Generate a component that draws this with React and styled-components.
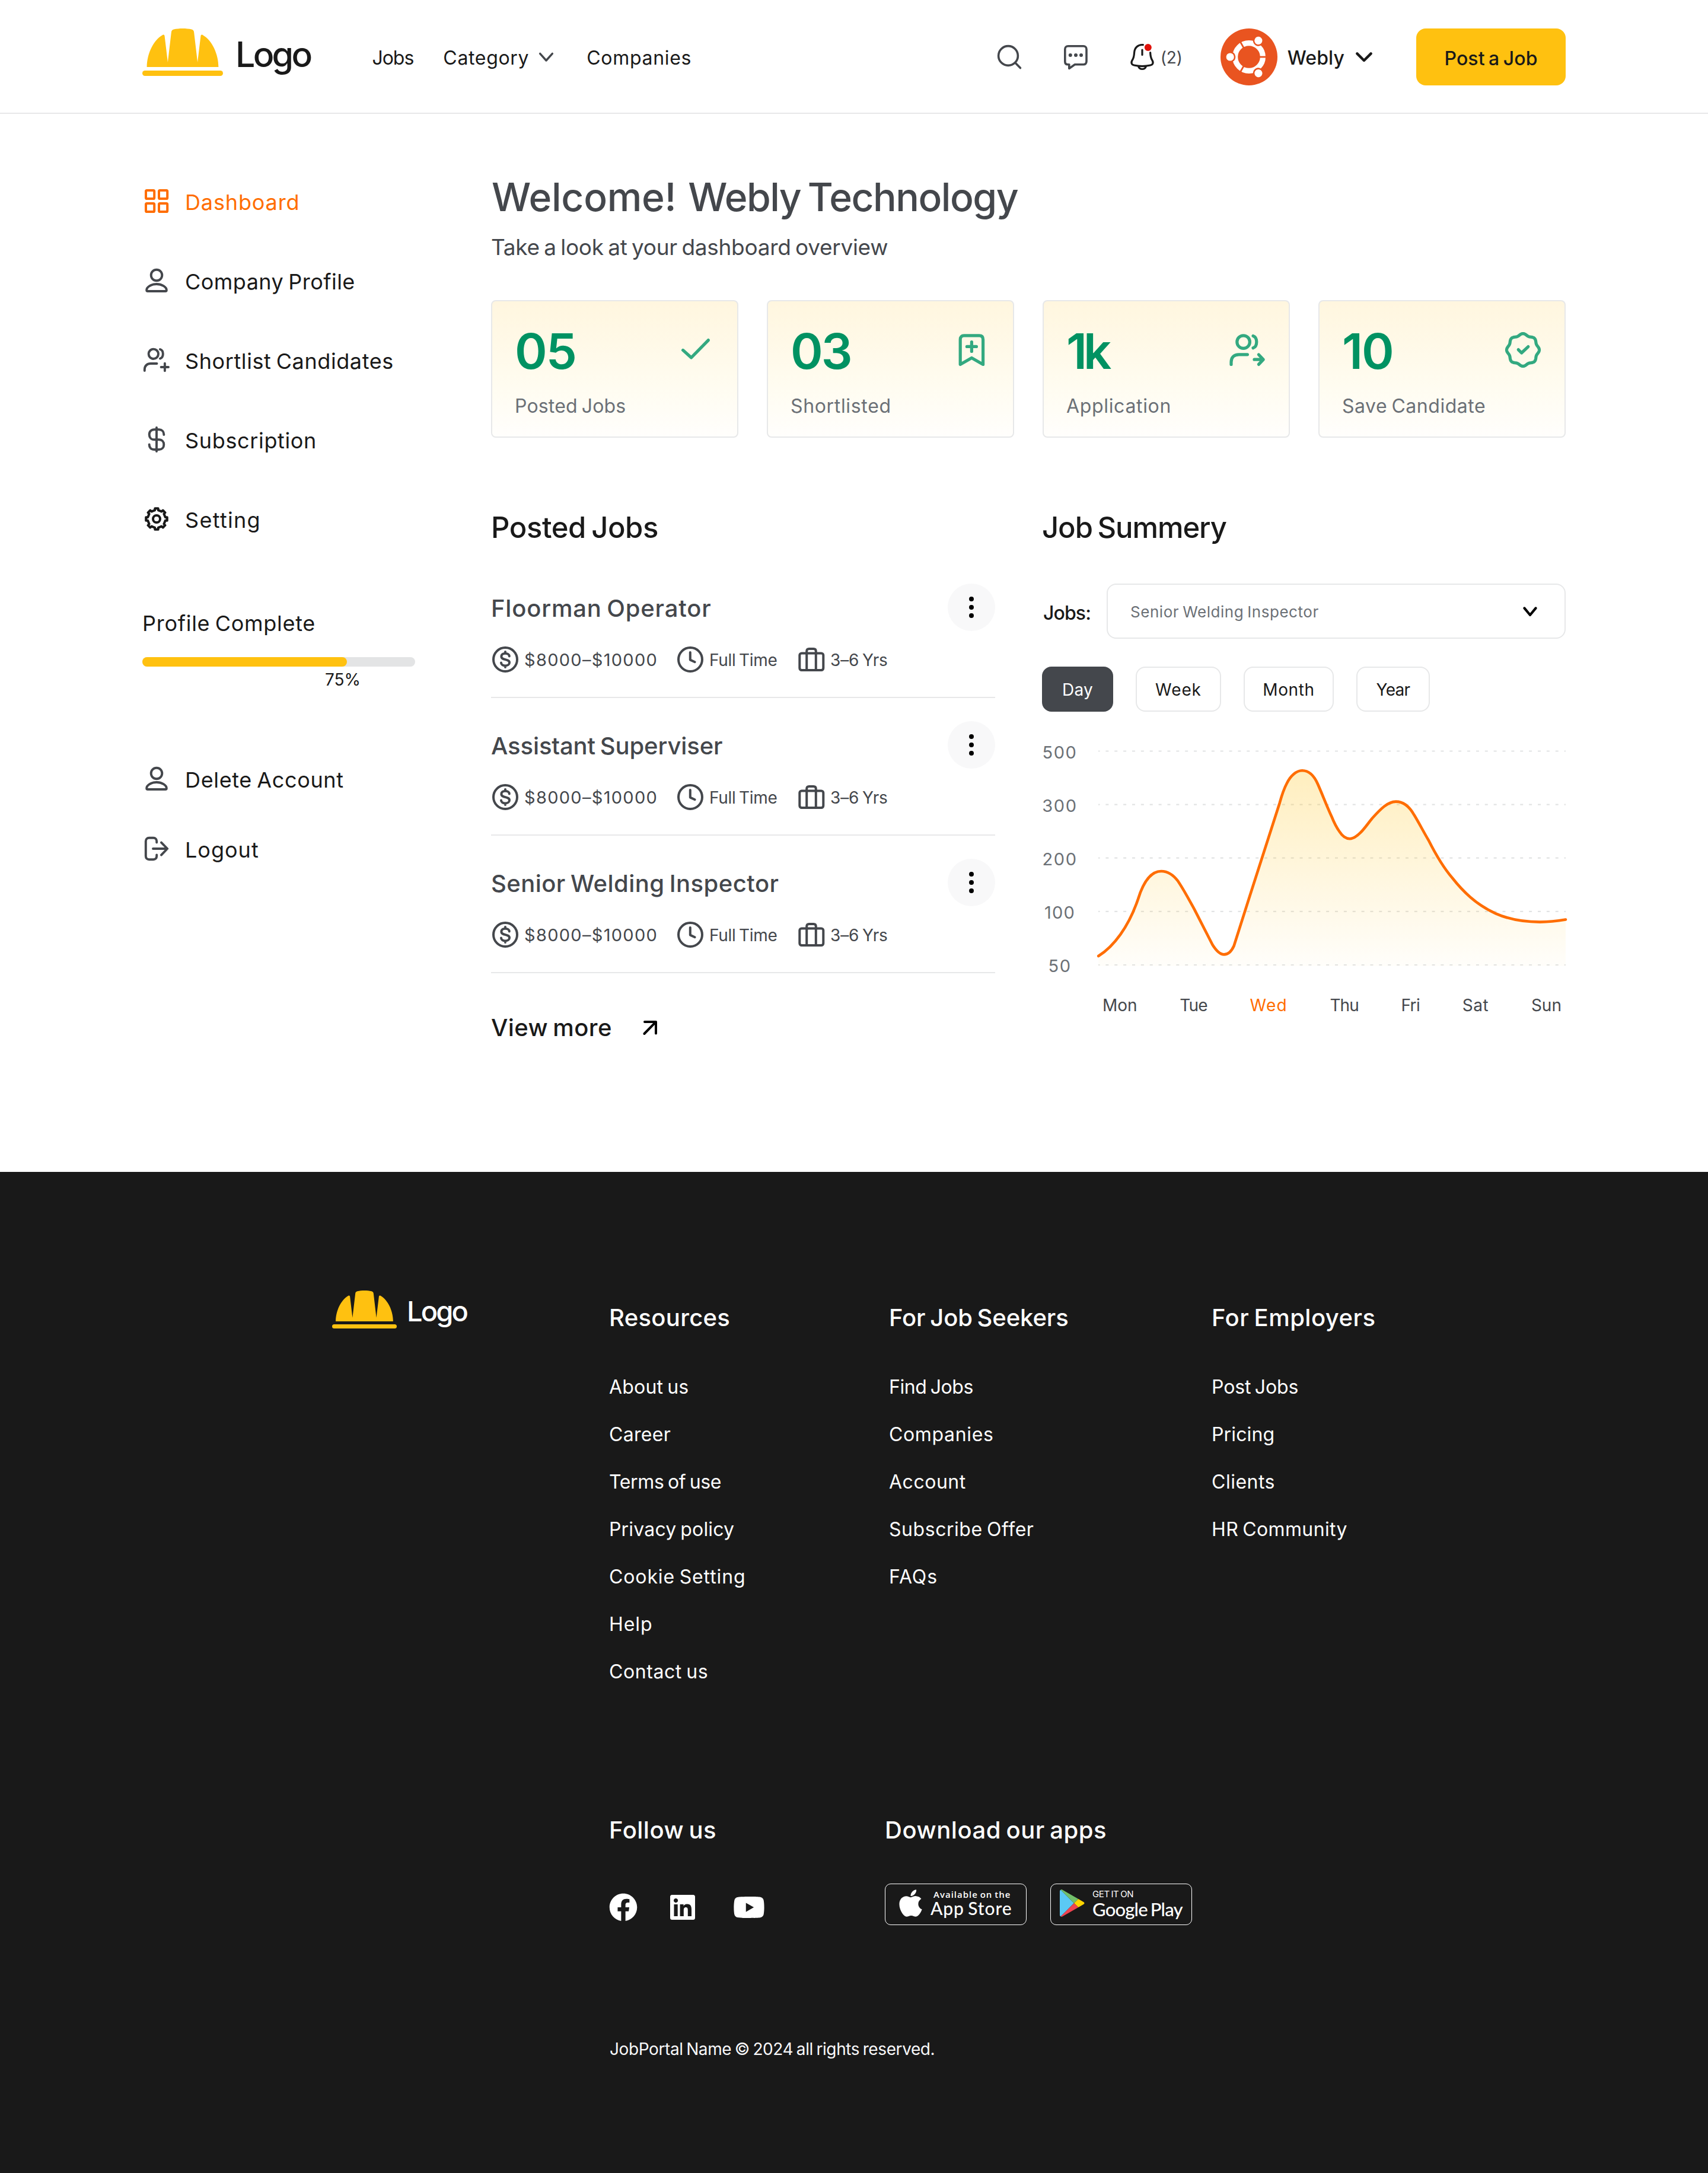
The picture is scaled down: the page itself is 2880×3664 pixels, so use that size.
import React from "react";
import styled, { createGlobalStyle, css } from "styled-components";
import { FaApple, FaFacebook, FaLinkedin, FaYoutube } from "react-icons/fa";

const color = {
  ink: "#191919",
  slate: "#44474c",
  muted: "#6b7076",
  line: "#e7e8e9",
  amber: "#ffc110",
  orange: "#ff6d00",
  green: "#009262",
  white: "#ffffff",
};

const GlobalStyle = createGlobalStyle`
  *, *::before, *::after { box-sizing: border-box; }
  body {
    margin: 0;
    background: ${color.white};
    color: ${color.ink};
    font-family: Inter, "Noto Sans", sans-serif;
  }
  h1, h2, h3, p, ul { margin: 0; padding: 0; font-weight: inherit; }
  ul { list-style: none; }
  a { color: inherit; text-decoration: none; }
  button { font-family: inherit; margin: 0; padding: 0; border: 0; background: none; color: inherit; }
  svg { display: block; flex: none; overflow: visible; }
`;

const tracking = css`
  letter-spacing: ${(p) => p.$ls || 0}px;
  word-spacing: -0.07em;
  white-space: pre;
`;

const Page = styled.div`
  width: 2880px;
`;

/* ---------- icons ---------- */

const Stroke = styled.svg`
  width: ${(p) => p.$size || 48}px;
  height: ${(p) => p.$size || 48}px;
  fill: none;
  stroke: ${(p) => p.$color || color.slate};
  stroke-width: ${(p) => p.$weight || 3.9};
  stroke-linecap: round;
  stroke-linejoin: round;
`;

const polar = (steps, radius) =>
  Array.from({ length: steps }, (_, i) => {
    const a = (i / steps) * Math.PI * 2 - Math.PI / 2;
    const r = radius(i, a);
    return [Math.cos(a) * r, Math.sin(a) * r];
  });

const closed = (points, c) =>
  "M" + points.map(([x, y]) => `${(c + x).toFixed(2)} ${(c + y).toFixed(2)}`).join("L") + "Z";

const gearPath = closed(
  Array.from({ length: 8 }).flatMap((_, i) =>
    [
      [-17, 14.8],
      [-11, 15],
      [-8.5, 18],
      [8.5, 18],
      [11, 15],
      [17, 14.8],
    ].map(([deg, r]) => {
      const a = ((i * 45 + deg - 90) * Math.PI) / 180;
      return [Math.cos(a) * r, Math.sin(a) * r];
    })
  ),
  24
);

const badgePath = closed(
  polar(160, (i, a) => 26 + 1.5 * Math.cos(8 * (a + Math.PI / 2))),
  32
);

const GridIcon = () => (
  <Stroke viewBox="0 0 48 48" $color={color.orange} $weight={4}>
    <rect x="6" y="6" width="14.2" height="14" rx="1.6" />
    <rect x="28" y="6" width="14.2" height="14" rx="1.6" />
    <rect x="6" y="28" width="14.2" height="14" rx="1.6" />
    <rect x="28" y="28" width="14.2" height="14" rx="1.6" />
  </Stroke>
);

const UserIcon = () => (
  <Stroke viewBox="0 0 48 48">
    <circle cx="24" cy="15" r="9.3" />
    <path d="M24 30C15 30 7.2 35 7.2 40.2C7.2 41.3 8 42 9 42H39C40 42 40.8 41.3 40.8 40.2C40.8 35 33 30 24 30Z" />
  </Stroke>
);

const UsersPlusIcon = () => (
  <Stroke viewBox="0 0 48 48">
    <circle cx="18.8" cy="13.8" r="8.2" />
    <path d="M30 6C33.2 7 34.8 10 34.8 13.8S33.2 20.6 30 21.6M3.8 42V40C3.8 34 8 30 14 30H24.5M37.9 29.8V42.2M31.6 36H44" />
  </Stroke>
);

const DollarIcon = () => (
  <Stroke viewBox="0 0 48 48">
    <path d="M24 4V44M36.3 16V15.5C36.3 10.5 33 7.3 28 7.3H20C15 7.3 11.7 10.5 11.7 15.7S15 24.3 20 24.3H28C33 24.3 36.3 27.8 36.3 32.7S33 41 28 41H20C15 41 11.7 37.8 11.7 33V32.4" />
  </Stroke>
);

const GearIcon = () => (
  <Stroke viewBox="0 0 48 48" $color={color.ink} $weight={4}>
    <path d={gearPath} />
    <circle cx="24" cy="24" r="6" />
  </Stroke>
);

const LogoutIcon = () => (
  <Stroke viewBox="0 0 48 48">
    <path d="M24.2 13.6V11.4C24.2 8 22 5.8 18.6 5.8H11.4C8 5.8 5.8 8 5.8 11.4V36.6C5.8 40 8 42.2 11.4 42.2H18.6C22 42.2 24.2 40 24.2 36.6V34.4M18 24H42M32 13.6L42.2 24L32 34.6" />
  </Stroke>
);

const SearchIcon = () => (
  <Stroke viewBox="0 0 48 48" $weight={3.6}>
    <circle cx="22" cy="22" r="16.4" />
    <path d="M34 34L42.4 42.6" />
  </Stroke>
);

const ChatIcon = () => (
  <Stroke viewBox="0 0 48 48" $weight={3.6}>
    <path d="M10.6 36.8H12.8V43.4L22.4 36.8H36.8C40 36.8 42 34.8 42 31.6V11C42 7.8 40 5.8 36.8 5.8H11C7.8 5.8 5.8 7.8 5.8 11V32C5.8 35 7.6 36.8 10.6 36.8Z" />
    <g fill={color.slate} stroke="none">
      <circle cx="14.8" cy="21" r="3" />
      <circle cx="24" cy="21" r="3" />
      <circle cx="33" cy="21" r="3" />
    </g>
  </Stroke>
);

const BellIcon = () => (
  <Stroke viewBox="0 0 48 48" $color={color.ink} $weight={3.2}>
    <path d="M25.4 3.6C16.8 2.8 11.2 8.4 10.6 16.4C10.2 22.4 10.2 24.8 7.4 29.2C4.6 33.6 5.8 37 10.2 38C19.2 40 28.8 40 37.8 38C42.2 37 43.4 33.6 40.6 29.2C38 25 37.8 21.4 37.6 16.6M24 12V20.4M17.8 40.6C19.6 45.8 28.4 45.8 30.2 40.6" />
    <circle cx="33.8" cy="8" r="6" fill="#e0120b" stroke="none" />
  </Stroke>
);

const ChevronIcon = ({ stroke = color.ink, weight = 4.4, reach = 11.6 }) => (
  <Stroke viewBox="0 0 36 36" $size={36} $color={stroke} $weight={weight}>
    <path d={`M${18 - reach} 12.4L18 24L${18 + reach} 12.4`} />
  </Stroke>
);

const AvatarLogo = () => (
  <svg width="96" height="96" viewBox="0 0 96 96">
    <circle cx="48" cy="48" r="48" fill="#e95420" />
    <circle cx="48" cy="48" r="23.4" fill="none" stroke="#fff" strokeWidth="9.2" />
    {[0, 120, 240].map((deg) => (
      <g key={deg} transform={`rotate(${deg} 48 48)`}>
        <path d="M62 48H80" stroke="#e95420" strokeWidth="2.8" />
        <circle cx="16.2" cy="48" r="9.2" fill="#e95420" />
        <circle cx="16.2" cy="48" r="6.6" fill="#fff" />
      </g>
    ))}
  </svg>
);

const HatMark = ({ width }) => (
  <svg width={width} height={(width * 80) / 136} viewBox="0 0 136 80" fill={color.amber}>
    <path d="M7.6 65C7.6 44 18 20 34.2 10.9C36.4 9.9 37.4 11 37.6 13L42.9 57L48.8 7C49 4 50 2.5 53 1.6C62 -.4 74 -.4 83 1.6C86 2.5 87 4 87.2 7L93.1 57L98.4 13C98.6 11 99.6 9.9 101.8 10.9C118 20 128.4 44 128.4 65Z" />
    <rect y="71" width="136" height="9" rx="4.4" />
  </svg>
);

const StatStroke = styled(Stroke)`
  stroke: #33a980;
  stroke-width: 5.2;
  margin-top: -4px;
`;

const statIcons = {
  check: (
    <StatStroke viewBox="0 0 64 64" $size={64}>
      <path d="M10.6 32.4L24.6 45L53.4 15.6" />
    </StatStroke>
  ),
  bookmark: (
    <StatStroke viewBox="0 0 64 64" $size={64}>
      <path d="M13.2 56.4V14.4C13.2 10 15.4 7.8 19.6 7.8H45.2C49.4 7.8 51.6 10 51.6 14.4V56.4L32.4 45.4ZM32.4 18.6V34.4M24.4 26.4H40.4" />
    </StatStroke>
  ),
  users: (
    <StatStroke viewBox="0 0 64 64" $size={64}>
      <circle cx="25.6" cy="18.6" r="10.8" />
      <path d="M42 8.4C45.8 9.6 47.8 13.6 47.8 18.6S45.8 27.6 42 28.8M5 56.4V52.6C5 44.6 10 39.8 18 39.8H32.4M44 48.2H59M51.4 40L59.2 48.2L51.4 56.4" />
    </StatStroke>
  ),
  badge: (
    <StatStroke viewBox="0 0 64 64" $size={64}>
      <path d={badgePath} />
      <path d="M24.2 31.6L29.6 37L40.8 26.6" />
    </StatStroke>
  ),
};

const MoneyIcon = () => (
  <Stroke viewBox="0 0 48 48" $weight={4}>
    <circle cx="24" cy="24" r="20" />
    <path d="M30.8 18.6C30.8 15.6 28 13.8 24 13.8S17.4 15.8 17.4 18.9C17.4 25.8 31 22.4 31 29.2C31 32.4 28 34.4 24 34.4S17 32.6 17 29.6M24 11V13.8M24 34.4V37" />
  </Stroke>
);

const ClockIcon = () => (
  <Stroke viewBox="0 0 48 48" $weight={4}>
    <circle cx="24" cy="24" r="20" />
    <path d="M23.8 12V24.6L31.6 28.2" />
  </Stroke>
);

const SuitcaseIcon = () => (
  <Stroke viewBox="0 0 48 48" $weight={4}>
    <rect x="4.3" y="13.4" width="40" height="28.6" rx="3.4" />
    <path d="M16.2 13.4V42M31.8 13.4V42M16.2 13V10C16.2 7.4 17.6 6 20.2 6H27.8C30.4 6 31.8 7.4 31.8 10V13" />
  </Stroke>
);

const ArrowUpRight = () => (
  <Stroke viewBox="0 0 32 32" $size={32} $color="#000" $weight={4}>
    <path d="M6.4 26L25.6 6.4M7 6H26V25.4" />
  </Stroke>
);

/* ---------- header ---------- */

const HeaderBar = styled.header`
  display: flex;
  height: 192px;
  padding: 48px 240px 0;
  border-bottom: 2px solid ${color.line};
`;

const Brand = styled.a`
  display: flex;
  align-items: flex-start;
  gap: ${(p) => p.$gap}px;
`;

const BrandName = styled.span`
  font-size: ${(p) => p.$size}px;
  font-weight: 500;
  line-height: ${(p) => p.$line}px;
  color: ${(p) => p.$color || color.ink};
  ${tracking}
`;

const MainNav = styled.nav`
  display: flex;
  align-items: center;
  gap: 50px;
  height: 96px;
  margin-left: 104px;
`;

const NavLink = styled.a`
  display: flex;
  align-items: center;
  gap: 11px;
`;

const NavText = styled.span`
  padding-top: 4px;
  font-size: 32px;
  line-height: 40px;
  font-weight: ${(p) => p.$weight || 400};
  ${tracking}
`;

const Actions = styled.div`
  display: flex;
  align-items: center;
  gap: 64px;
  height: 96px;
  margin-left: auto;
`;

const Notifications = styled.div`
  display: flex;
  align-items: center;
  gap: 7px;
`;

const Count = styled.span`
  padding-top: 2px;
  font-size: 28px;
  line-height: 36px;
  color: ${color.slate};
  ${tracking}
`;

const Account = styled.div`
  display: flex;
  align-items: center;
`;

const AccountName = styled(NavText)`
  margin: 0 15px 0 17px;
`;

const PostButton = styled.button`
  width: 252px;
  height: 96px;
  margin-left: 6px;
  padding-top: 4px;
  border-radius: 16px;
  background: ${color.amber};
  color: ${color.ink};
  font-size: 32px;
  font-weight: 500;
  ${tracking}
`;

const Header = () => (
  <HeaderBar>
    <Brand $gap={21}>
      <HatMark width={136} />
      <BrandName $size={59} $line={88} $ls={-3.7}>Logo</BrandName>
    </Brand>
    <MainNav>
      <NavLink><NavText $ls={-1}>Jobs</NavText></NavLink>
      <NavLink>
        <NavText $ls={0.67}>Category</NavText>
        <ChevronIcon stroke={color.slate} weight={3.4} reach={10.4} />
      </NavLink>
      <NavLink><NavText $ls={0.7}>Companies</NavText></NavLink>
    </MainNav>
    <Actions>
      <SearchIcon />
      <ChatIcon />
      <Notifications>
        <BellIcon />
        <Count $ls={-0.15}>(2)</Count>
      </Notifications>
      <Account>
        <AvatarLogo />
        <AccountName $weight={500} $ls={0.1}>Webly</AccountName>
        <ChevronIcon />
      </Account>
      <PostButton $ls={0.1}>Post a Job</PostButton>
    </Actions>
  </HeaderBar>
);

/* ---------- sidebar ---------- */

const Main = styled.main`
  display: flex;
  gap: 128px;
  height: 1784px;
  padding: 0 240px;
`;

const Sidebar = styled.aside`
  width: 460px;
  padding-top: 123px;
`;

const SideList = styled.ul`
  display: flex;
  flex-direction: column;
  gap: ${(p) => p.$gap}px;
`;

const SideItem = styled.li`
  display: flex;
  align-items: center;
  gap: 24px;
  height: 48px;
  color: ${(p) => (p.$active ? color.orange : color.ink)};
`;

const SideText = styled.span`
  padding-top: 3px;
  font-size: 36px;
  line-height: 44px;
  ${tracking}
`;

const Progress = styled.section`
  margin: 127px 0 125px;
`;

const ProgressTitle = styled.p`
  font-size: 36px;
  line-height: 50px;
  ${tracking}
`;

const Track = styled.div`
  height: 16px;
  margin-top: 32px;
  border-radius: 8px;
  background: #e3e4e5;
`;

const Fill = styled.div`
  width: 75%;
  height: 100%;
  border-radius: 8px;
  background: ${color.amber};
`;

const Percent = styled.p`
  margin: 4px 0 0 308px;
  font-size: 28px;
  line-height: 36px;
  ${tracking}
`;

const menu = [
  { label: "Dashboard", ls: 0.85, icon: <GridIcon />, active: true },
  { label: "Company Profile", ls: 0.46, icon: <UserIcon /> },
  { label: "Shortlist Candidates", ls: 0.6, icon: <UsersPlusIcon /> },
  { label: "Subscription", ls: 0.65, icon: <DollarIcon /> },
  { label: "Setting", ls: 1.3, icon: <GearIcon /> },
];

const accountMenu = [
  { label: "Delete Account", ls: 0.65, icon: <UserIcon /> },
  { label: "Logout", ls: 1, icon: <LogoutIcon /> },
];

const Menu = ({ items, gap }) => (
  <SideList $gap={gap}>
    {items.map((item) => (
      <SideItem key={item.label} $active={item.active}>
        {item.icon}
        <SideText $ls={item.ls}>{item.label}</SideText>
      </SideItem>
    ))}
  </SideList>
);

/* ---------- overview ---------- */

const Content = styled.div`
  width: 1812px;
  padding-top: 100px;
`;

const Welcome = styled.h1`
  display: flex;
  gap: 20px;
  padding-left: 1px;
  font-size: 66px;
  font-weight: 500;
  line-height: 80px;
  color: ${color.slate};
`;

const WelcomePart = styled.span`
  ${tracking}
`;

const Lead = styled.p`
  margin-top: 21px;
  font-size: 37px;
  line-height: 48px;
  color: ${color.slate};
  ${tracking}
`;

const Stats = styled.div`
  display: grid;
  grid-template-columns: repeat(4, 1fr);
  gap: 48px;
  margin-top: 65px;
`;

const StatCard = styled.article`
  height: 232px;
  padding: 42px 38px 0;
  border: 2px solid ${color.line};
  border-radius: 8px;
  background: linear-gradient(180deg, #fff6df 0%, #fffcf0 62%, #fffefc 100%);
`;

const StatTop = styled.div`
  display: flex;
  align-items: center;
  justify-content: space-between;
`;

const StatValue = styled.span`
  font-size: 83px;
  font-weight: 600;
  line-height: 84px;
  color: ${color.green};
  ${tracking}
`;

const StatLabel = styled.p`
  margin-top: 31px;
  font-size: 32px;
  line-height: 40px;
  color: ${color.muted};
  ${tracking}
`;

const stats = [
  { value: "05", vls: -2, label: "Posted Jobs", ls: 0.17, icon: "check" },
  { value: "03", vls: -3, label: "Shortlisted", ls: 0.66, icon: "bookmark" },
  { value: "1k", vls: -6, label: "Application", ls: 0.67, icon: "users" },
  { value: "10", vls: -2, label: "Save Candidate", ls: 0.53, icon: "badge" },
];

const Panels = styled.div`
  display: flex;
  gap: 79px;
  margin-top: 121px;
`;

const SectionTitle = styled.h2`
  font-size: 49px;
  font-weight: 500;
  line-height: 62px;
  ${tracking}
`;

/* ---------- posted jobs ---------- */

const JobsPanel = styled.section`
  width: 850px;
`;

const JobList = styled.ul`
  margin-top: 24px;
`;

const JobRow = styled.li`
  height: 232px;
  padding-top: 39px;
  border-bottom: 2px solid ${color.line};
`;

const JobHead = styled.div`
  display: flex;
  align-items: center;
  justify-content: space-between;
`;

const JobTitle = styled.h3`
  padding-top: 2px;
  font-size: 40px;
  font-weight: 500;
  color: ${color.slate};
  ${tracking}
`;

const MoreButton = styled.button`
  display: flex;
  flex-direction: column;
  align-items: center;
  justify-content: center;
  gap: 6px;
  width: 80px;
  height: 80px;
  border-radius: 50%;
  background: #f8f8f9;
`;

const Dot = styled.span`
  width: 8px;
  height: 8px;
  border-radius: 50%;
  background: #000;
`;

const Meta = styled.div`
  display: grid;
  grid-template-columns: 312px 204px auto;
  margin-top: 24px;
`;

const MetaItem = styled.div`
  display: flex;
  align-items: center;
  gap: 8px;
  height: 48px;
`;

const MetaText = styled.span`
  padding-top: 1px;
  font-size: ${(p) => p.$size || 28}px;
  line-height: 40px;
  color: ${color.slate};
  ${tracking}
`;

const ViewMore = styled.a`
  display: flex;
  align-items: center;
  gap: 48px;
  margin-top: 67px;
  font-size: 40px;
  font-weight: 500;
  line-height: 50px;
  ${tracking}
`;

const jobs = [
  { title: "Floorman Operator", ls: 0.8 },
  { title: "Assistant Superviser", ls: -0.12 },
  { title: "Senior Welding Inspector", ls: 0.44 },
];

const PostedJobs = () => (
  <JobsPanel>
    <SectionTitle $ls={-0.41}>Posted Jobs</SectionTitle>
    <JobList>
      {jobs.map((job) => (
        <JobRow key={job.title}>
          <JobHead>
            <JobTitle $ls={job.ls}>{job.title}</JobTitle>
            <MoreButton aria-label="More">
              <Dot />
              <Dot />
              <Dot />
            </MoreButton>
          </JobHead>
          <Meta>
            <MetaItem><MoneyIcon /><MetaText $size={29} $ls={1.3}>$8000–$10000</MetaText></MetaItem>
            <MetaItem><ClockIcon /><MetaText $ls={-0.32}>Full Time</MetaText></MetaItem>
            <MetaItem><SuitcaseIcon /><MetaText $ls={-0.15}>3–6 Yrs</MetaText></MetaItem>
          </Meta>
        </JobRow>
      ))}
    </JobList>
    <ViewMore $ls={0.4}>
      View more
      <ArrowUpRight />
    </ViewMore>
  </JobsPanel>
);

/* ---------- job summary ---------- */

const SummaryPanel = styled.section`
  width: 883px;
`;

const FilterRow = styled.div`
  display: flex;
  align-items: center;
  margin-top: 63px;
`;

const FilterLabel = styled.span`
  width: 109px;
  padding: 6px 0 0 2px;
  font-size: 32px;
  font-weight: 500;
  ${tracking}
`;

const Select = styled.div`
  display: flex;
  align-items: center;
  justify-content: space-between;
  flex: 1;
  height: 93px;
  padding: 0 40px 0 38px;
  border: 2px solid ${color.line};
  border-radius: 16px;
`;

const SelectValue = styled.span`
  padding-top: 2px;
  font-size: 26px;
  color: ${color.muted};
  ${tracking}
`;

const Tabs = styled.div`
  display: flex;
  gap: 38px;
  margin-top: 47px;
`;

const Tab = styled.button`
  width: ${(p) => p.$width}px;
  height: 76px;
  padding-top: 2px;
  border: 2px solid ${(p) => (p.$active ? color.slate : color.line)};
  border-radius: 16px;
  background: ${(p) => (p.$active ? color.slate : color.white)};
  color: ${(p) => (p.$active ? color.white : color.ink)};
  font-size: 28px;
  ${tracking}
`;

const Chart = styled.div`
  display: flex;
  margin-top: 24px;
`;

const YAxis = styled.div`
  width: 60px;
  margin-right: 31px;
`;

const YTick = styled.div`
  font-size: 29px;
  line-height: 90px;
  text-align: center;
  color: ${color.muted};
  ${tracking}
`;

const XAxis = styled.div`
  display: flex;
  justify-content: space-between;
  padding: 1px 7px 0 102px;
`;

const XTick = styled.span`
  font-size: 28px;
  line-height: 40px;
  color: ${(p) => (p.$active ? color.orange : color.slate)};
  ${tracking}
`;

const curve =
  "M4.2 352C30 336 55 303 71 256C82 220 97 209 110 209C122 209 131 216 138.3 225.7C148 240 157 257 166 273.4L196.5 333C204 345 210 349.4 216 349.4C222 349.4 228 345 232.6 335L259.6 250L309.8 93.7C313 82 318 68 322 60.5C328 48 338 39.2 347.7 39.2C358 39.2 367 46 374 62C382 80 389 99 397.3 116.7C401 126 406 136 410.8 142.5C415 149 421 154.2 428 154.2C435 154.2 441 149 446.3 143.7C453 137 459 128 466 119.5C480 104 492 91.6 505.7 91.6C518 91.6 528 99 536.3 113.8C545 128 552 142 560.8 156.8C572 179 585 202 600.6 220C610 232 620 243 631.2 252.7C644 264 658 273 674 280.3C696 290 720 294.6 748.7 294.6C764 294.6 778 293 792 290.6";

const Plot = () => (
  <svg width="792" height="450" viewBox="0 0 792 450" fill="none">
    <defs>
      <linearGradient id="area" x1="0" y1="39" x2="0" y2="369" gradientUnits="userSpaceOnUse">
        <stop offset="0" stopColor={color.amber} stopOpacity="0.27" />
        <stop offset="1" stopColor={color.amber} stopOpacity="0.02" />
      </linearGradient>
    </defs>
    {[42.5, 132.6, 222.7, 312.8, 403].map((y) => (
      <path key={y} d={`M4 ${y}H792`} stroke="#e2e3e4" strokeWidth="2.2" strokeDasharray="5 9.87" strokeDashoffset="2.5" />
    ))}
    <g transform="translate(0 36)">
      <path d={`${curve}V369H4.2Z`} fill="url(#area)" />
      <path d={curve} stroke={color.orange} strokeWidth="4.6" strokeLinecap="round" strokeLinejoin="round" />
    </g>
  </svg>
);

const ranges = [
  { label: "Day", width: 120, ls: 0.3, active: true },
  { label: "Week", width: 144, ls: 0.9 },
  { label: "Month", width: 152, ls: 0.6 },
  { label: "Year", width: 124, ls: -0.7 },
];

const days = [
  ["Mon", 0],
  ["Tue", -0.8],
  ["Wed", 1.2],
  ["Thu", -1],
  ["Fri", -0.6],
  ["Sat", 0.5],
  ["Sun", 0],
];

const yTicks = [
  ["500", 1.6],
  ["300", 1.6],
  ["200", 1.6],
  ["100", 1.2],
  ["50", 1.6],
];

const JobSummary = () => (
  <SummaryPanel>
    <SectionTitle $ls={-1.06}>Job Summery</SectionTitle>
    <FilterRow>
      <FilterLabel $ls={-0.89}>Jobs:</FilterLabel>
      <Select>
        <SelectValue $ls={0.54}>Senior Welding Inspector</SelectValue>
        <ChevronIcon stroke="#000" weight={4.2} reach={9.6} />
      </Select>
    </FilterRow>
    <Tabs>
      {ranges.map((r) => (
        <Tab key={r.label} $width={r.width} $active={r.active} $ls={r.ls}>{r.label}</Tab>
      ))}
    </Tabs>
    <Chart>
      <YAxis>
        {yTicks.map(([t, ls]) => (
          <YTick key={t} $ls={ls}>{t}</YTick>
        ))}
      </YAxis>
      <Plot />
    </Chart>
    <XAxis>
      {days.map(([d, ls]) => (
        <XTick key={d} $ls={ls} $active={d === "Wed"}>{d}</XTick>
      ))}
    </XAxis>
  </SummaryPanel>
);

/* ---------- footer ---------- */

const FooterArea = styled.footer`
  display: flex;
  height: 1688px;
  padding: 200px 0 0 560px;
  background: ${color.ink};
  color: ${color.white};
`;

const FooterBrand = styled.div`
  width: 467px;
`;

const FooterBody = styled.div`
  padding-top: 20px;
`;

const LinkColumns = styled.div`
  display: grid;
  grid-template-columns: 472px 544px auto;
`;

const FooterTitle = styled.h3`
  font-size: 40px;
  font-weight: 500;
  line-height: 51px;
  ${tracking}
`;

const FooterLinks = styled.ul`
  margin-top: 52px;
`;

const FooterLink = styled.li`
  font-size: 32px;
  line-height: 80px;
  ${tracking}
`;

const Connect = styled.div`
  display: grid;
  grid-template-columns: 465px auto;
  margin-top: 201px;
`;

const Socials = styled.div`
  display: flex;
  align-items: center;
  margin-top: 78px;
`;

const SocialLink = styled.a`
  margin-right: ${(p) => p.$space || 0}px;
  font-size: ${(p) => p.$size || 48}px;
`;

const Stores = styled.div`
  display: flex;
  gap: 40px;
  margin-top: 65px;
`;

const StoreBadge = styled.a`
  display: flex;
  align-items: center;
  gap: ${(p) => p.$gap}px;
  width: 239px;
  height: 70px;
  padding: 0 0 4px ${(p) => p.$pad}px;
  border: 1.5px solid ${color.white};
  border-radius: 10px;
`;

const AppleMark = styled(FaApple)`
  width: 39px;
  height: 52px;
`;

const StoreText = styled.div`
  display: flex;
  flex-direction: column;
`;

const AppleSmall = styled.span`
  padding-left: 5px;
  font: 600 15px/16px "Open Sans", sans-serif;
  ${tracking}
`;

const AppleLarge = styled.span`
  font: 500 30px/30px Lato, sans-serif;
  ${tracking}
`;

const GoogleSmall = styled.span`
  font-size: 15px;
  line-height: 20px;
  ${tracking}
`;

const GoogleLarge = styled.span`
  font-family: Lato, sans-serif;
  font-size: 31px;
  font-weight: 500;
  line-height: 30px;
  ${tracking}
`;

const Copyright = styled.p`
  margin-top: 189px;
  padding-left: 1px;
  font-size: 28px;
  line-height: 40px;
  color: #f8f8f9;
  ${tracking}
`;

const PlayMark = () => (
  <svg width="42" height="46" viewBox="0 0 42 46">
    <path d="M1.6 .4L24 23L1.6 45.6C.6 45 0 44.2 0 43V3C0 1.8 .6 1 1.6 .4Z" fill="#5bc9f4" />
    <path d="M1.6 .4C2.4 0 3.4 0 4.4 .6L31.4 16L24 23Z" fill="#72bf6a" />
    <path d="M31.4 16L40 21C42 22.2 42 23.8 40 25L31.4 30L24 23Z" fill="#ffd400" />
    <path d="M1.6 45.6C2.4 46 3.4 46 4.4 45.4L31.4 30L24 23Z" fill="#ef4350" />
  </svg>
);

const footerColumns = [
  {
    title: "Resources",
    ls: 0.3,
    links: [
      ["About us", 0.2],
      ["Career", 0.31],
      ["Terms of use", -0.35],
      ["Privacy policy", 0.17],
      ["Cookie Setting", 0.88],
      ["Help", 0.9],
      ["Contact us", 0.58],
    ],
  },
  {
    title: "For Job Seekers",
    ls: -0.1,
    links: [
      ["Find Jobs", -0.43],
      ["Companies", 0.65],
      ["Account", 0.52],
      ["Subscribe Offer", 0.55],
      ["FAQs", 0.9],
    ],
  },
  {
    title: "For Employers",
    ls: 0.48,
    links: [
      ["Post Jobs", -0.14],
      ["Pricing", 0.14],
      ["Clients", 0.5],
      ["HR Community", 0.37],
    ],
  },
];

const Footer = () => (
  <FooterArea>
    <FooterBrand>
      <Brand $gap={17}>
        <HatMark width={109} />
        <BrandName $size={47} $line={70} $ls={-2.9} $color={color.white}>Logo</BrandName>
      </Brand>
    </FooterBrand>
    <FooterBody>
      <LinkColumns>
        {footerColumns.map((column) => (
          <div key={column.title}>
            <FooterTitle $ls={column.ls}>{column.title}</FooterTitle>
            <FooterLinks>
              {column.links.map(([label, ls]) => (
                <FooterLink key={label} $ls={ls}>{label}</FooterLink>
              ))}
            </FooterLinks>
          </div>
        ))}
      </LinkColumns>
      <Connect>
        <div>
          <FooterTitle $ls={0.5}>Follow us</FooterTitle>
          <Socials>
            <SocialLink $space={52}><FaFacebook /></SocialLink>
            <SocialLink $space={61}><FaLinkedin /></SocialLink>
            <SocialLink $size={54}><FaYoutube /></SocialLink>
          </Socials>
        </div>
        <div>
          <FooterTitle $ls={0.55}>Download our apps</FooterTitle>
          <Stores>
            <StoreBadge $pad={23} $gap={14}>
              <AppleMark />
              <StoreText>
                <AppleSmall $ls={1}>Available on the</AppleSmall>
                <AppleLarge $ls={0.9}>App Store</AppleLarge>
              </StoreText>
            </StoreBadge>
            <StoreBadge $pad={15} $gap={13}>
              <PlayMark />
              <StoreText>
                <GoogleSmall $ls={-0.4}>GET IT ON</GoogleSmall>
                <GoogleLarge $ls={-0.8}>Google Play</GoogleLarge>
              </StoreText>
            </StoreBadge>
          </Stores>
        </div>
      </Connect>
      <Copyright $ls={-0.4}>JobPortal Name © 2024 all rights reserved.</Copyright>
    </FooterBody>
  </FooterArea>
);

export default function App() {
  return (
    <Page>
      <GlobalStyle />
      <Header />
      <Main>
        <Sidebar>
          <Menu items={menu} gap={86} />
          <Progress>
            <ProgressTitle $ls={0.72}>Profile Complete</ProgressTitle>
            <Track><Fill /></Track>
            <Percent $ls={-0.1}>75%</Percent>
          </Progress>
          <Menu items={accountMenu} gap={70} />
        </Sidebar>
        <Content>
          <Welcome>
            <WelcomePart $ls={-0.3}>Welcome!</WelcomePart>
            <WelcomePart $ls={-1.5}>Webly Technology</WelcomePart>
          </Welcome>
          <Lead $ls={-0.3}>Take a look at your dashboard overview</Lead>
          <Stats>
            {stats.map((s) => (
              <StatCard key={s.label}>
                <StatTop>
                  <StatValue $ls={s.vls}>{s.value}</StatValue>
                  {statIcons[s.icon]}
                </StatTop>
                <StatLabel $ls={s.ls}>{s.label}</StatLabel>
              </StatCard>
            ))}
          </Stats>
          <Panels>
            <PostedJobs />
            <JobSummary />
          </Panels>
        </Content>
      </Main>
      <Footer />
    </Page>
  );
}
